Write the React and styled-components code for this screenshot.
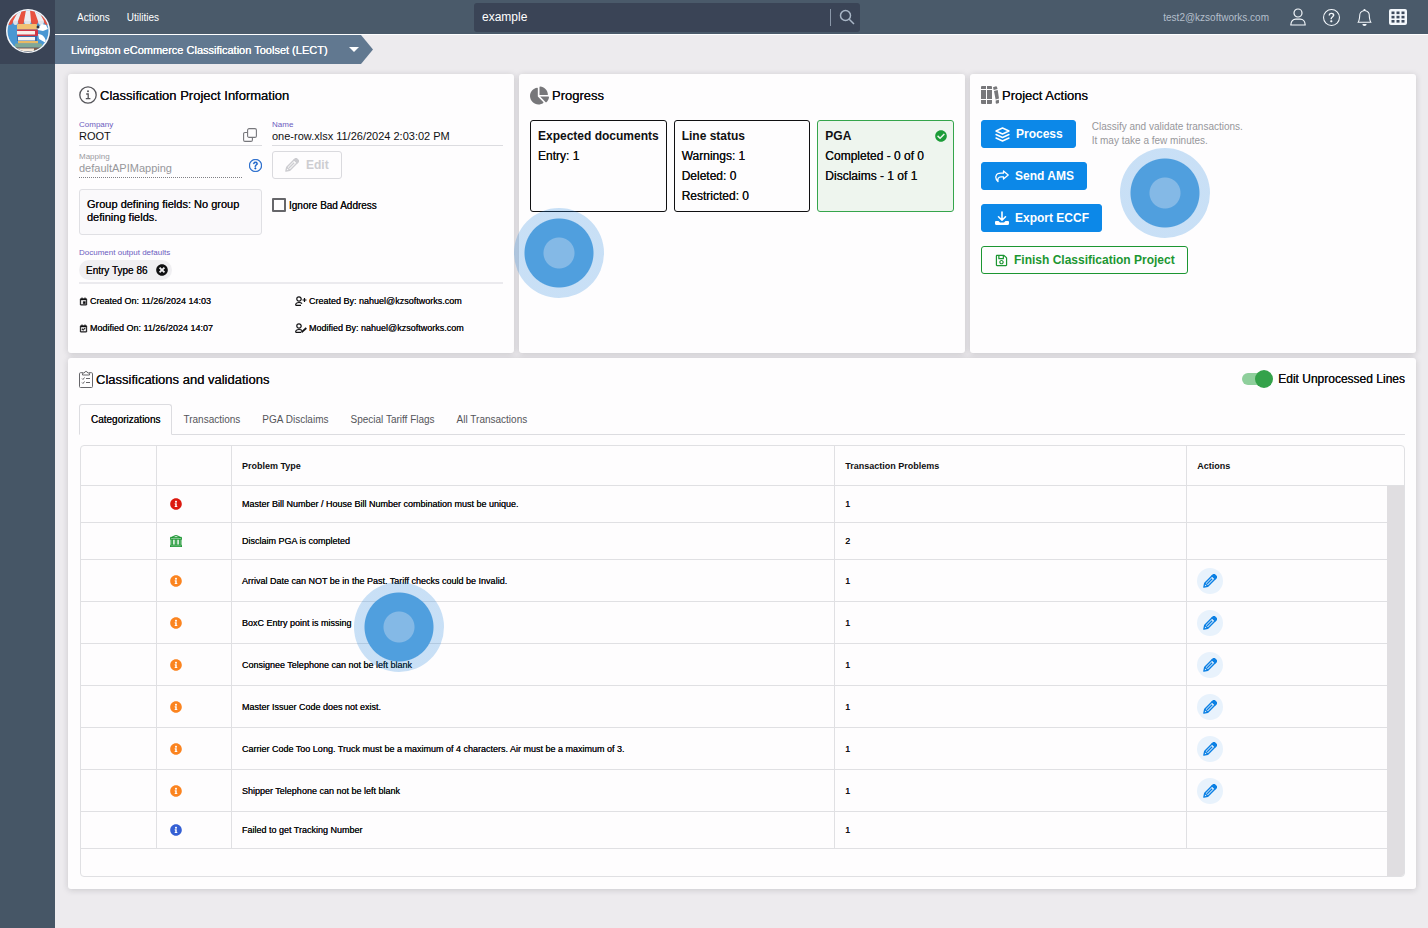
import React, { useState } from 'react';
import styled, { createGlobalStyle, css } from 'styled-components';
import { FaChartPie, FaRegSave, FaInfoCircle, FaTimesCircle, FaCheckCircle } from 'react-icons/fa';
import { BsBank, BsQuestionCircle, BsBell } from 'react-icons/bs';
import { BiCalendarEvent, BiCalendarCheck } from 'react-icons/bi';

const tabs = [
  'Categorizations',
  'Transactions',
  'PGA Disclaims',
  'Special Tariff Flags',
  'All Transactions',
];

const problems = [
  { id: 1, type: 'error', text: 'Master Bill Number / House Bill Number combination must be unique.', count: 1 },
  { id: 2, type: 'pga', text: 'Disclaim PGA is completed', count: 2 },
  { id: 3, type: 'warning', text: 'Arrival Date can NOT be in the Past. Tariff checks could be Invalid.', count: 1, editable: true },
  { id: 4, type: 'warning', text: 'BoxC Entry point is missing', count: 1, editable: true },
  { id: 5, type: 'warning', text: 'Consignee Telephone can not be left blank', count: 1, editable: true },
  { id: 6, type: 'warning', text: 'Master Issuer Code does not exist.', count: 1, editable: true },
  { id: 7, type: 'warning', text: 'Carrier Code Too Long. Truck must be a maximum of 4 characters. Air must be a maximum of 3.', count: 1, editable: true },
  { id: 8, type: 'warning', text: 'Shipper Telephone can not be left blank', count: 1, editable: true },
  { id: 9, type: 'info', text: 'Failed to get Tracking Number', count: 1 },
];

const statusColors = {
  error: '#dc1a10',
  warning: '#fb8420',
  info: '#3560d4',
  pga: '#1c9632',
};

/* ---------- icons ---------- */

const Logo = () => (
  <svg width='46' height='46' viewBox='0 0 46 46' aria-hidden='true'>
    <defs>
      <clipPath id='logo-disc'>
        <circle cx='23' cy='23' r='20.5' />
      </clipPath>
    </defs>
    <circle cx='23' cy='23' r='22' fill='#f6f8fb' />
    <g clipPath='url(#logo-disc)'>
      <rect width='46' height='46' fill='#4a97d2' />
      <path d='M10 2h26l9 11H1z' fill='#eceef2' />
      <path d='M10 2h4l-6 11H0zM17 2h4l-2 11h-6zM25 2h4l4 11h-7zM33 2h4l9 11h-7z' fill='#e8523f' />
      <path d='M0 13h8a4 4 0 0 1-8 0zM13 13h6a3 4 0 0 1-6 0zM26 13h7a3.500 4 0 0 1-7 0zM39 13h7a3.500 4 0 0 1-7 0z' fill='#e8523f' />
      <path d='M8 13h5a2.500 4 0 0 1-5 0zM19 13h7a3.500 4 0 0 1-7 0zM33 13h6a3 4 0 0 1-6 0z' fill='#dfe3ea' />
      <rect x='12' y='16' width='20' height='5.500' rx='1' fill='#f0c172' />
      <rect x='12' y='21.500' width='21' height='6.500' rx='1' fill='#cf3646' />
      <rect x='12' y='23' width='18' height='3.500' fill='#f7efe8' />
      <rect x='12' y='28' width='20' height='5' fill='#3a6fae' />
      <rect x='13' y='29' width='17' height='3.500' fill='#f4f4f1' />
      <rect x='13' y='33' width='20' height='2.500' fill='#e8b964' />
      <rect x='10' y='35.500' width='27' height='4' rx='1' fill='#7fa896' />
      <rect x='10' y='39.500' width='27' height='5' rx='1' fill='#7a5c4b' />
      <rect x='12' y='40.500' width='17' height='2.500' fill='#f3e6d7' />
      <path d='M32 20l5-4 4 1 2 4-5 2-5-1zM33 26c5 0 8 4 8 9l-7-4z' fill='#fff' />
      <circle cx='33' cy='19' r='1.500' fill='#2c3442' />
    </g>
  </svg>
);

const InfoIcon = () => (
  <svg width='18' height='18' viewBox='0 0 18 18' fill='none' stroke='#55555a' strokeWidth='1.300'>
    <circle cx='9' cy='9' r='8.200' />
    <path d='M7.200 8H9.200V12.500M6.800 12.700H11.400' />
    <circle cx='9' cy='5.300' r='1' fill='#55555a' stroke='none' />
  </svg>
);

const SearchIcon = () => (
  <svg width='16' height='16' viewBox='0 0 16 16' fill='none' stroke='#a9b6c6' strokeWidth='1.500'>
    <circle cx='6.500' cy='6.500' r='5' />
    <path d='M10.200 10.200L15 15' />
  </svg>
);

const PersonIcon = () => (
  <svg width='18' height='18' viewBox='0 0 18 18' fill='none' stroke='currentColor' strokeWidth='1.200'>
    <circle cx='9' cy='5' r='4' />
    <path d='M1.800 17c0-3.800 2.400-5.800 5-5.800h4.400c2.600 0 5 2 5 5.800z' strokeLinejoin='round' />
  </svg>
);

const AppsIcon = () => (
  <svg width='18' height='16' viewBox='0 0 18 16'>
    <rect width='18' height='16' rx='2' fill='#f4f8fc' />
    {[2.5, 7.5, 12.5].map((x) =>
      [2.5, 6.8, 11].map((y) => <rect key={`${x}-${y}`} x={x} y={y} width='3' height='2.6' fill='#3d4a5c' />)
    )}
  </svg>
);

const CopyIcon = () => (
  <svg width='14' height='14' viewBox='0 0 14 14' fill='none' stroke='#77777c' strokeWidth='1.100'>
    <rect x='4.600' y='0.600' width='8.800' height='8.800' rx='1.500' />
    <path d='M4.500 4.500H2A1.400 1.400 0 0 0 .6 6v6A1.400 1.400 0 0 0 2 13.400h6A1.400 1.400 0 0 0 9.400 12V9.500' />
  </svg>
);

const PencilIcon = ({ size = 14 }) => (
  <svg width={size} height={size} viewBox='0 0 16 16' fill='none' stroke='currentColor' strokeWidth='1.600' strokeLinejoin='round'>
    <path d='M1 15l1-4.500L10.500 2 14 5.500 5.500 14z' />
    <path d='M4.500 11.500l6-6M2 10.500l3.500 3.500' />
    <path d='M10.500 2l1-1c.5-.5 1.400-.5 2 0L15 2.500c.6.600.6 1.500 0 2l-1 1z' fill='currentColor' />
  </svg>
);

const BooksIcon = () => (
  <svg width='18' height='18' viewBox='0 0 18 18' fill='#77777a'>
    <path d='M1 0h4v3H0V1a1 1 0 0 1 1-1zM0 4h5v9H0zM0 14h5v4H1a1 1 0 0 1-1-1zM6 0h4a1 1 0 0 1 1 1v2H6zM6 4h5v9H6zM6 14h5v3a1 1 0 0 1-1 1H6z' />
    <path d='M12 1.200l3-.9a1 1 0 0 1 1 .7l.5 2-3.800 1zM13 5l3.700-1 1.300 8.500-3.400 1zM14.700 14.600l3.200-.9.100 2.600a1 1 0 0 1-.7 1l-1.600.5a1 1 0 0 1-1-.7z' />
  </svg>
);

const ClipboardIcon = () => (
  <svg width='14' height='18' viewBox='0 0 14 18' fill='none' stroke='#66666a' strokeWidth='1'>
    <path d='M4 2.700H1.500a1 1 0 0 0-1 1v12.800a1 1 0 0 0 1 1h11a1 1 0 0 0 1-1V3.700a1 1 0 0 0-1-1H10' />
    <path d='M3.500 5V3.500L6 2.300a1 1 0 0 1 2 0l2.500 1.200V5z' />
    <path d='M3 8.500l1 1 1.500-2M7 8.500h4M3 12.500l1 1 1.500-2M7 12.500h4' />
  </svg>
);

const LayersIcon = () => (
  <svg width='15' height='15' viewBox='0 0 15 15' fill='none' stroke='currentColor' strokeWidth='1.400' strokeLinejoin='round' strokeLinecap='round'>
    <path d='M7.500 1L14 4 7.500 7 1 4z' />
    <path d='M1 7.500l6.500 3 6.500-3M1 11l6.500 3 6.500-3' />
  </svg>
);

const SendIcon = () => (
  <svg width='14' height='13' viewBox='0 0 14 13' fill='none' stroke='currentColor' strokeWidth='1.300' strokeLinejoin='round' strokeLinecap='round'>
    <path d='M8.500 1l4.700 4-4.700 4V6.800H6C3.500 6.800 2.500 8.500 3 11.500 1 9.500.5 7.500 1 6c.6-2 2.500-2.800 5-2.800h2.500z' />
  </svg>
);

const ExportIcon = () => (
  <svg width='14' height='14' viewBox='0 0 14 14' fill='none' stroke='currentColor' strokeWidth='1.600' strokeLinecap='round' strokeLinejoin='round'>
    <path d='M7 1v8M3.500 5.800L7 9.200l3.500-3.400' />
    <path d='M1 10h2.500L5 11.500h4L10.500 10H13a1 1 0 0 1 1 1v1.500a1.500 1.500 0 0 1-1.500 1.500h-11A1.500 1.500 0 0 1 0 12.500V11a1 1 0 0 1 1-1z' fill='currentColor' stroke='none' />
  </svg>
);

const UserMarkIcon = ({ mark }) => (
  <svg width='12' height='10' viewBox='0 0 12 10' fill='none' stroke='currentColor' strokeWidth='1.200' strokeLinejoin='round'>
    <circle cx='4' cy='3' r='2.200' />
    <path d='M.6 9.300c0-2 1.400-2.800 3.400-2.800 1.400 0 2.400.3 3 1.200M.6 9.300H6' />
    {mark === 'plus' ? <path d='M9.500 2v4M7.500 4h4' /> : <path d='M6.500 9.300L11.300 5' strokeWidth='1.800' />}
  </svg>
);

/* ---------- page ---------- */

const App = () => {
  const [activeTab, setActiveTab] = useState('Categorizations');
  const [editLines, setEditLines] = useState(true);

  return (
    <>
      <GlobalStyle />
      <Shell>
        <Sidebar>
          <LogoBox href='#home' aria-label='Home'>
            <Logo />
          </LogoBox>
        </Sidebar>

        <Column>
          <Topbar>
            <Menu>
              <a href='#actions'>Actions</a>
              <a href='#utilities'>Utilities</a>
            </Menu>
            <Search>
              <input type='text' aria-label='Search' defaultValue='example' />
              <button type='button' aria-label='Run search'>
                <SearchIcon />
              </button>
            </Search>
            <Account>
              <span>test2@kzsoftworks.com</span>
              <button type='button' aria-label='Profile'><PersonIcon /></button>
              <button type='button' aria-label='Help'><BsQuestionCircle size={17} /></button>
              <button type='button' aria-label='Notifications'><BsBell size={17} /></button>
              <button type='button' aria-label='Apps'><AppsIcon /></button>
            </Account>
          </Topbar>

          <Crumb type='button'>
            Livingston eCommerce Classification Toolset (LECT)
            <Caret />
          </Crumb>

          <Content>
            <TopPanels>
              <ProjectInfo />
              <Progress />
              <ProjectActions />
            </TopPanels>

            <Panel>
              <PanelHead>
                <PanelTitle>
                  <ClipboardIcon />
                  Classifications and validations
                </PanelTitle>
                <SwitchLabel>
                  <Switch type='checkbox' checked={editLines} onChange={() => setEditLines(!editLines)} />
                  Edit Unprocessed Lines
                </SwitchLabel>
              </PanelHead>

              <TabList role='tablist'>
                {tabs.map((tab) => (
                  <Tab
                    key={tab}
                    type='button'
                    role='tab'
                    aria-selected={tab === activeTab}
                    $active={tab === activeTab}
                    onClick={() => setActiveTab(tab)}
                  >
                    {tab}
                  </Tab>
                ))}
              </TabList>

              <ProblemTable />
              <Hotspot $left={286} $top={224} />
            </Panel>
          </Content>
        </Column>
      </Shell>
    </>
  );
};

const ProjectInfo = () => (
  <Panel>
    <PanelTitle>
      <InfoIcon />
      Classification Project Information
    </PanelTitle>

    <InfoGrid>
      <Field>
        <label htmlFor='company'>Company</label>
        <FieldLine>
          <input id='company' defaultValue='ROOT' />
          <IconButton type='button' aria-label='Pick company'><CopyIcon /></IconButton>
        </FieldLine>
      </Field>
      <Field>
        <label htmlFor='name'>Name</label>
        <FieldLine>
          <input id='name' defaultValue='one-row.xlsx 11/26/2024 2:03:02 PM' />
        </FieldLine>
      </Field>

      <MappingRow>
        <Field $disabled>
          <label htmlFor='mapping'>Mapping</label>
          <FieldLine $dotted>
            <input id='mapping' defaultValue='defaultAPIMapping' disabled />
          </FieldLine>
        </Field>
        <IconButton type='button' aria-label='Mapping help' $color='#1660c8'>
          <BsQuestionCircle size={13} strokeWidth='0.5' />
        </IconButton>
      </MappingRow>
      <EditButton type='button' disabled>
        <PencilIcon />
        Edit
      </EditButton>

      <GroupBox>Group defining fields: No group defining fields.</GroupBox>
      <CheckLabel>
        <input type='checkbox' />
        Ignore Bad Address
      </CheckLabel>
    </InfoGrid>

    <Defaults>
      <SmallLabel>Document output defaults</SmallLabel>
      <Chip>
        Entry Type 86
        <IconButton type='button' aria-label='Remove Entry Type 86' $color='#101012'>
          <FaTimesCircle size={12} />
        </IconButton>
      </Chip>
    </Defaults>

    <MetaGrid>
      <Meta><BiCalendarEvent size={9} strokeWidth='1' />Created On: 11/26/2024 14:03</Meta>
      <Meta><UserMarkIcon mark='plus' />Created By: nahuel@kzsoftworks.com</Meta>
      <Meta><BiCalendarCheck size={9} strokeWidth='1' />Modified On: 11/26/2024 14:07</Meta>
      <Meta><UserMarkIcon mark='pen' />Modified By: nahuel@kzsoftworks.com</Meta>
    </MetaGrid>
  </Panel>
);

const Progress = () => (
  <Panel>
    <PanelTitle>
      <FaChartPie size={19} color='#77777a' />
      Progress
    </PanelTitle>
    <Cards>
      <Card>
        <h3>Expected documents</h3>
        <p>Entry: 1</p>
      </Card>
      <Card>
        <h3>Line status</h3>
        <p>Warnings: 1</p>
        <p>Deleted: 0</p>
        <p>Restricted: 0</p>
      </Card>
      <Card $done>
        <h3>PGA <FaCheckCircle size={12} color='#1c9c38' /></h3>
        <p>Completed - 0 of 0</p>
        <p>Disclaims - 1 of 1</p>
      </Card>
    </Cards>
    <Hotspot $left={-5} $top={134} />
  </Panel>
);

const ProjectActions = () => (
  <Panel>
    <PanelTitle>
      <BooksIcon />
      Project Actions
    </PanelTitle>
    <ActionList>
      <ActionRow>
        <ActionButton type='button'><LayersIcon />Process</ActionButton>
        <Hint>
          Classify and validate transactions.
          <br />
          It may take a few minutes.
        </Hint>
      </ActionRow>
      <ActionButton type='button'><SendIcon />Send AMS</ActionButton>
      <ActionButton type='button'><ExportIcon />Export ECCF</ActionButton>
      <ActionButton type='button' $outline><FaRegSave size={13} />Finish Classification Project</ActionButton>
    </ActionList>
    <Hotspot $left={150} $top={74} />
  </Panel>
);

const ProblemTable = () => (
  <TableFrame>
    <Table>
      <colgroup>
        <col style={{ width: 76 }} />
        <col style={{ width: 75 }} />
        <col style={{ width: '45.6%' }} />
        <col style={{ width: '26.6%' }} />
        <col />
        <col style={{ width: 17 }} />
      </colgroup>
      <thead>
        <tr>
          <th aria-label='Select' />
          <th aria-label='Status' />
          <th>Problem Type</th>
          <th>Transaction Problems</th>
          <th colSpan={2}>Actions</th>
        </tr>
      </thead>
      <tbody>
        {problems.map((row, index) => {
          const { id, type, text, count, editable } = row;
          return (
            <Row key={id} $tall={editable}>
              <td />
              <StatusCell $type={type}>
                {type === 'pga' ? <BsBank size={12} stroke='currentColor' strokeWidth='0.5' /> : <FaInfoCircle size={12} />}
              </StatusCell>
              <td>{text}</td>
              <td>{count}</td>
              <td>
                {editable && (
                  <RoundButton type='button' aria-label={`Edit ${text}`}>
                    <PencilIcon />
                  </RoundButton>
                )}
              </td>
              {index === 0 && <Gutter rowSpan={problems.length + 1} />}
            </Row>
          );
        })}
        <EndRow>
          <td colSpan={5} />
        </EndRow>
      </tbody>
    </Table>
  </TableFrame>
);

/* ---------- styles ---------- */

const GlobalStyle = createGlobalStyle`
  * {
    box-sizing: border-box;
  }
  body {
    margin: 0;
    background: #edebee;
    color: #101012;
    font-family: "Liberation Sans", Arial, Helvetica, sans-serif;
    font-size: 10px;
  }
  button, input {
    font-family: inherit;
    color: inherit;
  }
  button {
    cursor: pointer;
  }
  h2, h3, p {
    margin: 0;
  }
  svg {
    flex-shrink: 0;
  }
`;

// a little heavier than regular
const medium = css`
  text-shadow: 0 0 0 currentColor;
`;

const Shell = styled.div`
  display: flex;
  min-height: 100vh;
`;

const Sidebar = styled.aside`
  flex: 0 0 55px;
  background: #465666;
`;

const LogoBox = styled.a`
  display: flex;
  align-items: center;
  justify-content: center;
  height: 64px;
  padding-bottom: 2px;
  background: #3a4456;
`;

const Column = styled.div`
  flex: 1;
  min-width: 0;
`;

const Topbar = styled.header`
  display: grid;
  grid-template-columns: 419px minmax(0, 386px) 1fr;
  align-items: center;
  height: 35px;
  background: #4a5a6a;
  border-bottom: 1px solid #fff;
`;

const Menu = styled.nav`
  display: flex;
  gap: 17px;
  padding-left: 22px;
  a {
    color: #fff;
    text-decoration: none;
  }
`;

const Search = styled.div`
  display: flex;
  align-items: center;
  height: 29px;
  background: #3a4456;
  border-radius: 3px;
  input {
    flex: 1;
    min-width: 0;
    height: 17px;
    padding: 0 8px;
    border: 0;
    border-right: 1px solid #8a97a8;
    outline: none;
    background: transparent;
    color: #fff;
    font-size: 12px;
  }
  button {
    display: flex;
    padding: 0 5px 0 8px;
    border: 0;
    background: transparent;
  }
`;

const Account = styled.div`
  display: flex;
  align-items: center;
  justify-content: flex-end;
  gap: 16px;
  padding-right: 21px;
  color: #f4f8fc;
  span {
    margin-right: 4px;
    color: #b4bfcb;
  }
  button {
    display: flex;
    padding: 0;
    border: 0;
    background: transparent;
  }
`;

const Crumb = styled.button`
  display: flex;
  align-items: center;
  justify-content: space-between;
  min-width: 318px;
  height: 29px;
  padding: 0 14px 0 16px;
  border: 0;
  background: #617890;
  color: #fff;
  font-size: 11px;
  clip-path: polygon(0 0, calc(100% - 12px) 0, 100% 50%, calc(100% - 12px) 100%, 0 100%);
  ${medium}
`;

const Caret = styled.span`
  border: 5px solid transparent;
  border-top-color: #fff;
  border-bottom: 0;
`;

const Content = styled.main`
  display: grid;
  gap: 5px;
  padding: 10px 12px 38px 13px;
`;

const TopPanels = styled.div`
  display: grid;
  grid-template-columns: repeat(3, minmax(0, 1fr));
  gap: 5px;
`;

const Panel = styled.section`
  position: relative;
  min-width: 0;
  padding: 11px 11px 12px;
  background: #fefdfe;
  border-radius: 3px;
  box-shadow: 0 1px 6px rgba(40, 40, 50, 0.18);
`;

const PanelHead = styled.div`
  display: flex;
  justify-content: space-between;
`;

const PanelTitle = styled.h2`
  display: flex;
  align-items: center;
  gap: 3px;
  height: 20px;
  font-size: 13px;
  font-weight: 400;
  ${medium}
`;

const InfoGrid = styled.div`
  display: grid;
  grid-template-columns: 183fr 231fr;
  column-gap: 10px;
  margin-top: 15px;
`;

const fieldLabel = css`
  display: block;
  height: 10px;
  font-size: 8px;
  line-height: 10px;
  color: #6c5cc0;
`;

const SmallLabel = styled.span`
  ${fieldLabel}
`;

const Field = styled.div`
  flex: 1;
  min-width: 0;
  label {
    ${fieldLabel}
    ${({ $disabled }) => $disabled && 'color: #9a9a9e;'}
  }
  input {
    flex: 1;
    min-width: 0;
    height: 12px;
    padding: 0;
    border: 0;
    outline: none;
    background: transparent;
    font-size: 11px;
  }
  input:disabled {
    color: #97979b;
  }
`;

const FieldLine = styled.div`
  display: flex;
  align-items: flex-end;
  height: 16px;
  padding: 0 5px 3px 0;
  border-bottom: 1px solid #dcdce0;
  ${({ $dotted }) => $dotted && 'border-bottom: 1px dotted #808085;'}
`;

const IconButton = styled.button`
  display: flex;
  padding: 0;
  border: 0;
  background: transparent;
  color: ${({ $color }) => $color || 'inherit'};
`;

const MappingRow = styled.div`
  display: flex;
  align-items: center;
  gap: 7px;
  margin-top: 5px;
  height: 28px;
`;

const EditButton = styled.button`
  display: flex;
  align-items: center;
  justify-self: start;
  gap: 7px;
  height: 28px;
  margin-top: 5px;
  padding: 0 12px;
  border: 1px solid #dadade;
  border-radius: 3px;
  background: transparent;
  color: #cdcdd1;
  font-size: 12px;
  font-weight: 700;
`;

const GroupBox = styled.div`
  margin-top: 10px;
  padding: 8px 7px;
  min-height: 46px;
  border: 1px solid #e0e0e4;
  border-radius: 3px;
  background: #faf9fb;
  font-size: 11px;
  line-height: 13px;
  ${medium}
`;

const CheckLabel = styled.label`
  display: flex;
  align-items: center;
  gap: 3px;
  height: 14px;
  margin-top: 19px;
  ${medium}
  input {
    appearance: none;
    width: 14px;
    height: 14px;
    margin: 0;
    border: 2px solid #66666a;
    border-radius: 1px;
  }
  input:checked {
    background: #66666a;
  }
`;

const Defaults = styled.div`
  margin-top: 13px;
  padding-bottom: 2px;
  border-bottom: 2px solid #ebeaee;
`;

const Chip = styled.span`
  display: inline-flex;
  align-items: center;
  gap: 8px;
  height: 20px;
  margin-top: 2px;
  padding: 0 4px 0 7px;
  border-radius: 10px;
  background: #f0eff2;
  font-size: 10px;
  vertical-align: top;
  ${medium}
`;

const MetaGrid = styled.div`
  display: grid;
  grid-template-columns: 1fr 1fr;
  gap: 15px 8px;
  padding: 11px 0 7px;
`;

const Meta = styled.span`
  display: flex;
  align-items: center;
  gap: 2px;
  height: 12px;
  font-size: 9px;
  white-space: nowrap;
  ${medium}
`;

const Cards = styled.div`
  display: grid;
  grid-template-columns: repeat(3, minmax(0, 1fr));
  gap: 7px;
  margin-top: 15px;
`;

const Card = styled.div`
  padding: 5px 0 5px 7px;
  border: 1px solid ${({ $done }) => ($done ? '#35a54c' : '#101012')};
  border-radius: 3px;
  background: ${({ $done }) => ($done ? '#eef5ee' : 'transparent')};
  font-size: 12px;
  line-height: 20px;
  white-space: nowrap;
  h3 {
    display: flex;
    align-items: center;
    justify-content: space-between;
    padding-right: 6px;
    font-size: 12px;
  }
  p {
    ${medium}
  }
`;

const Hotspot = styled.span`
  position: absolute;
  left: ${({ $left }) => $left}px;
  top: ${({ $top }) => $top}px;
  width: 90px;
  height: 90px;
  border-radius: 50%;
  background: radial-gradient(
    circle,
    #84b9e6 15px,
    #509fde 16px,
    #509fde 34px,
    rgba(30, 130, 220, 0.24) 35px
  );
  pointer-events: none;
`;

const ActionList = styled.div`
  display: flex;
  flex-direction: column;
  align-items: flex-start;
  gap: 14px;
  margin-top: 15px;
`;

const ActionRow = styled.div`
  display: flex;
  gap: 16px;
`;

const ActionButton = styled.button`
  display: flex;
  align-items: center;
  gap: 6px;
  height: 28px;
  padding: 0 12px 0 13px;
  border: 1px solid ${({ $outline }) => ($outline ? '#1c9632' : '#0c88e8')};
  border-radius: 3px;
  background: ${({ $outline }) => ($outline ? 'transparent' : '#0c88e8')};
  color: ${({ $outline }) => ($outline ? '#1c9632' : '#fff')};
  font-size: 12px;
  font-weight: 700;
`;

const Hint = styled.p`
  color: #97979b;
  line-height: 14px;
`;

const SwitchLabel = styled.label`
  display: flex;
  align-items: center;
  gap: 6px;
  font-size: 12px;
  ${medium}
`;

const Switch = styled.input`
  appearance: none;
  position: relative;
  width: 30px;
  height: 12px;
  margin: 0;
  border-radius: 6px;
  background: ${({ checked }) => (checked ? '#8fcf9c' : '#c4c4c8')};
  &::before {
    content: '';
    position: absolute;
    top: -3px;
    left: ${({ checked }) => (checked ? '13px' : '0')};
    width: 18px;
    height: 18px;
    border-radius: 50%;
    background: ${({ checked }) => (checked ? '#34a24a' : '#f4f4f6')};
  }
`;

const TabList = styled.div`
  display: flex;
  height: 31px;
  margin-top: 15px;
  border-bottom: 1px solid #dcdce0;
`;

const Tab = styled.button`
  height: 31px;
  padding: 0 10px;
  border: 1px solid transparent;
  border-radius: 3px 3px 0 0;
  background: transparent;
  color: #55555a;
  font-size: 10px;
  ${({ $active }) =>
    $active &&
    css`
      padding: 0 11px;
      border-color: #dcdce0;
      border-bottom-color: #fefdfe;
      background: #fefdfe;
      color: #101012;
      ${medium}
    `}
`;

const TableFrame = styled.div`
  margin: 10px 0 0 1px;
  border: 1px solid #e0e0e3;
  border-radius: 4px;
  overflow: hidden;
`;

const Table = styled.table`
  width: 100%;
  table-layout: fixed;
  border-collapse: separate;
  border-spacing: 0;
  font-size: 9px;
  th, td {
    padding: 0 10px;
    border-bottom: 1px solid #e0e0e3;
    border-right: 1px solid #e0e0e3;
    text-align: left;
  }
  td {
    ${medium}
  }
  th {
    height: 40px;
  }
  th:last-child, td:nth-child(5) {
    border-right: 0;
  }
`;

const Row = styled.tr`
  height: ${({ $tall }) => ($tall ? '42px' : '37px')};
`;

const StatusCell = styled.td`
  color: ${({ $type }) => statusColors[$type]};
  && {
    padding-left: 13px;
  }
  svg {
    display: block;
  }
`;

const RoundButton = styled.button`
  display: flex;
  align-items: center;
  justify-content: center;
  width: 26px;
  height: 26px;
  padding: 0;
  border: 0;
  border-radius: 50%;
  background: #e8f2fc;
  color: #0c80e4;
`;

const Gutter = styled.td`
  &&& {
    padding: 0;
    border: 0;
    background: #e0dee1;
  }
`;

const EndRow = styled.tr`
  height: 27px;
  && td {
    border: 0;
  }
`;

export default App;
